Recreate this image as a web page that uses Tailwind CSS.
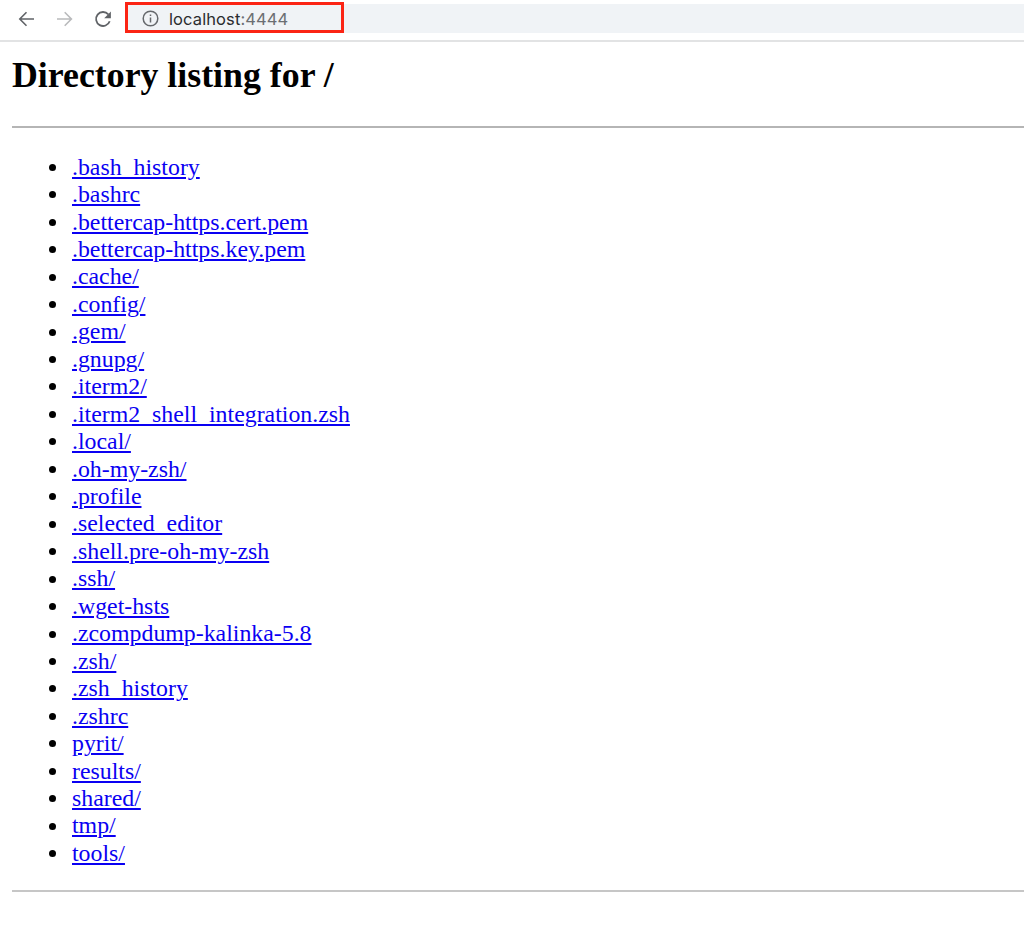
<!DOCTYPE html>
<html lang="en">
<head>
<meta charset="utf-8">
<title>Directory listing for /</title>
<script src="https://cdn.jsdelivr.net/npm/@tailwindcss/browser@4"></script>
</head>
<body class="h-[931px] overflow-hidden bg-white text-black">
<header class="flex h-[42px] items-start border-b-2 border-[#e2e3e4] pl-[18px]">
  <nav class="flex h-[38px] w-[107px] shrink-0 items-center">
    <svg class="h-[18px] w-[18px]" viewBox="0 0 18 18" fill="none" stroke="#606367" stroke-width="1.600"><path d="M16 9H2M8.500 2.300 1.800 9l6.700 6.700"/></svg>
    <svg class="ml-5 h-[18px] w-[18px]" viewBox="0 0 18 18" fill="none" stroke="#b9babc" stroke-width="1.600"><path d="M1 9h14M8.700 2.300 15.400 9l-6.700 6.700"/></svg>
    <svg class="ml-5 h-[18px] w-[18px]" viewBox="0 0 18 18" fill="none"><path d="M14.300 4.300A7 7 0 1 0 15.700 11.300" stroke="#606367" stroke-width="1.800"/><path d="M16.900 1.500v6.700H10.200z" fill="#606367"/></svg>
  </nav>
  <div class="flex flex-1 flex-col">
    <div class="mt-1 flex h-[29px] bg-[#f0f3f6]">
      <div class="-mt-[2px] flex h-[31px] w-[219px] items-center border-3 border-[#fb2414] pl-[14px] font-[Inter,sans-serif] text-[16.500px] tracking-[0.100px] text-[#2b2c2f]">
        <svg class="mt-[2px] mr-[10px] h-[17px] w-[17px]" viewBox="0 0 17 17" fill="none" stroke="#65686c" stroke-width="1.500"><circle cx="8.500" cy="8.500" r="7.300"/><path d="M8.500 7.500v5M8.500 4.400v1.700"/></svg>
        <span class="mt-[3px]">localhost<span class="text-[#6b6e72]">:4444</span></span>
      </div>
    </div>
  </div>
</header>
<main class="pl-3 font-['Liberation_Serif',serif]">
  <h1 class="pt-3 text-[35.800px] leading-[42px] font-bold">Directory listing for /</h1>
  <hr class="mt-[30px] border-t-2 border-[#b5b5b5]">
  <ul class="mt-[25.600px] text-[23.840px] leading-[27.460px] text-[#0a00f2] [&_a]:underline [&_a]:decoration-[1.500px] [&_a]:underline-offset-[2px] [&>li]:flex [&>li]:items-center [&>li]:pl-[37px] [&>li]:before:mr-4 [&>li]:before:h-[7px] [&>li]:before:w-[7px] [&>li]:before:rounded-full [&>li]:before:bg-black">
    <li><a href="#">.bash_history</a></li>
    <li><a href="#">.bashrc</a></li>
    <li><a href="#">.bettercap-https.cert.pem</a></li>
    <li><a href="#">.bettercap-https.key.pem</a></li>
    <li><a href="#">.cache/</a></li>
    <li><a href="#">.config/</a></li>
    <li><a href="#">.gem/</a></li>
    <li><a href="#">.gnupg/</a></li>
    <li><a href="#">.iterm2/</a></li>
    <li><a href="#">.iterm2_shell_integration.zsh</a></li>
    <li><a href="#">.local/</a></li>
    <li><a href="#">.oh-my-zsh/</a></li>
    <li><a href="#">.profile</a></li>
    <li><a href="#">.selected_editor</a></li>
    <li><a href="#">.shell.pre-oh-my-zsh</a></li>
    <li><a href="#">.ssh/</a></li>
    <li><a href="#">.wget-hsts</a></li>
    <li><a href="#">.zcompdump-kalinka-5.8</a></li>
    <li><a href="#">.zsh/</a></li>
    <li><a href="#">.zsh_history</a></li>
    <li><a href="#">.zshrc</a></li>
    <li><a href="#">pyrit/</a></li>
    <li><a href="#">results/</a></li>
    <li><a href="#">shared/</a></li>
    <li><a href="#">tmp/</a></li>
    <li><a href="#">tools/</a></li>
  </ul>
  <hr class="mt-[22.400px] border-t-2 border-[#c6c6c6]">
</main>
</body>
</html>
